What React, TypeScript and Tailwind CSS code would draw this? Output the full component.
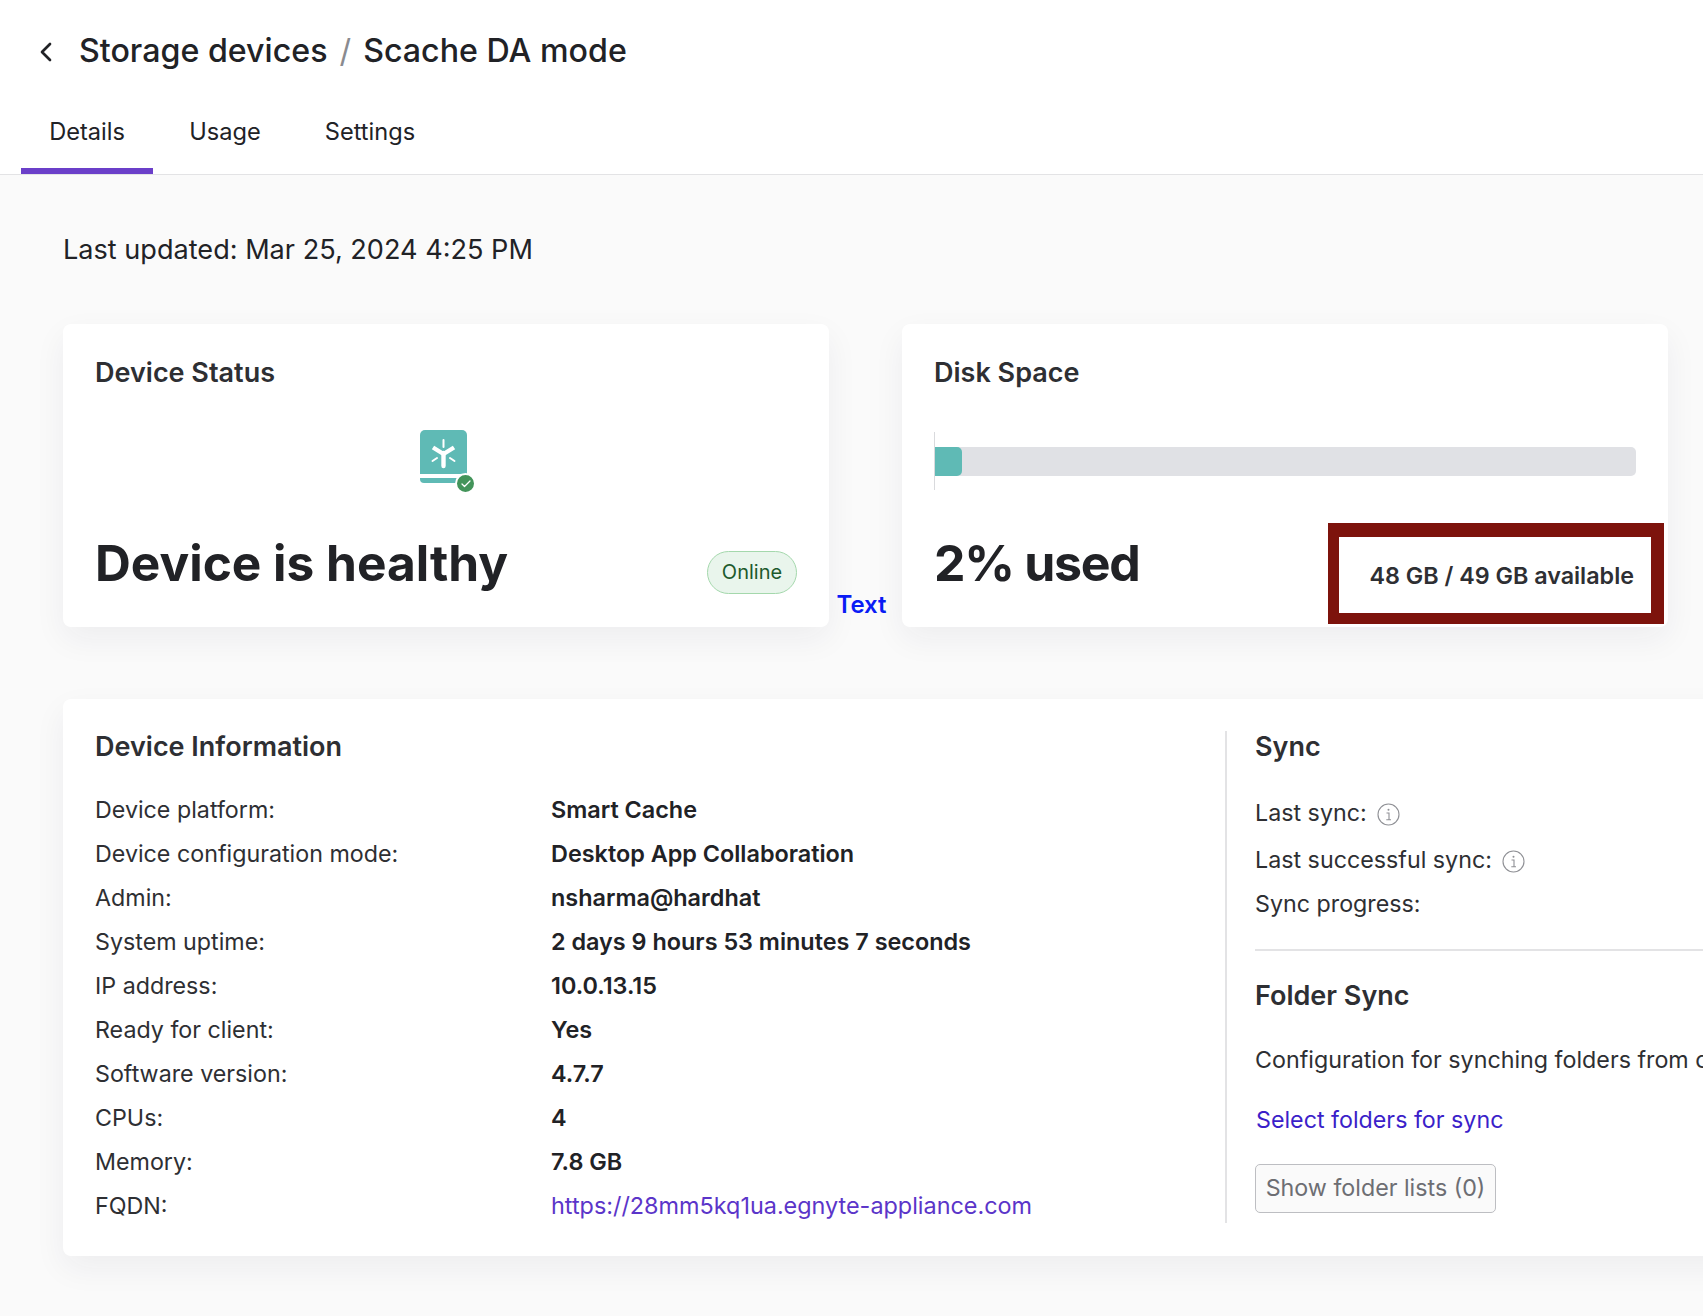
import { ChevronLeft, Check } from "lucide-react";

const deviceInfo = [
  { label: "Device platform:", value: "Smart Cache" },
  { label: "Device configuration mode:", value: "Desktop App Collaboration" },
  { label: "Admin:", value: "nsharma@hardhat" },
  { label: "System uptime:", value: "2 days 9 hours 53 minutes 7 seconds" },
  { label: "IP address:", value: "10.0.13.15" },
  { label: "Ready for client:", value: "Yes" },
  { label: "Software version:", value: "4.7.7" },
  { label: "CPUs:", value: "4" },
  { label: "Memory:", value: "7.8 GB" },
];

function DeviceIcon() {
  return (
    <div className="relative h-[54px] w-[47px]">
      <svg width="47" height="54" viewBox="0 0 47 54" className="block">
        <path d="M5 0H42a5 5 0 0 1 5 5V44H0V5a5 5 0 0 1 5-5Z" fill="#5fbab5" />
        <path d="M0 48H42V53H4a4 4 0 0 1-4-4Z" fill="#5fbab5" />
        <g stroke="#fff" fill="none">
          <path d="M23.5 10V17" strokeWidth="2" strokeLinecap="round" />
          <path d="M23.5 23V36" strokeWidth="4.4" strokeLinecap="round" />
          <path d="M23.5 24L13 17.5M23.5 24L34 17.5" strokeWidth="4.4" />
          <path d="M12.5 31L17 28M34.5 31L30 28" strokeWidth="2" strokeLinecap="round" />
        </g>
      </svg>
      <div className="absolute left-[35px] top-[43px] flex h-[21px] w-[21px] items-center justify-center rounded-full border-2 border-white bg-[#43945a]">
        <Check className="h-[12px] w-[12px] text-white" strokeWidth={2.5} />
      </div>
    </div>
  );
}

function InfoIcon() {
  return (
    <svg width="23" height="23" viewBox="0 0 23 23" fill="none" className="mt-[2px]">
      <circle cx="11.5" cy="11.5" r="10.5" stroke="#8f9095" strokeWidth="1.1" />
      <circle cx="11.5" cy="6.8" r="1" fill="#8f9095" />
      <path d="M9.5 10H12V16.5M9.3 16.8H14" stroke="#8f9095" strokeWidth="1.1" />
    </svg>
  );
}

export default function App() {
  return (
    <div className="h-[1316px] w-[1703px] overflow-hidden bg-[#fafafa] font-['Inter',sans-serif] text-[#212226]">
      <div className="h-[175px] border-b border-[#e3e3e5] bg-white">
        <div className="flex h-[100px] items-center pl-[30px] pt-[3px]">
          <ChevronLeft className="h-[32px] w-[32px] text-[#212226]" strokeWidth={2} />
          <h1 className="ml-[17px] text-[32.2px] font-medium leading-none">
            Storage devices
            <span className="mx-[12px] font-normal text-[#8a8b90]">/</span>
            Scache DA mode
          </h1>
        </div>
        <div className="flex h-[74px] pl-[21px] text-[23.6px] leading-none">
          <div className="flex w-[132px] items-center justify-center border-b-[6px] border-[#6b3fc9] pb-[4px]">
            Details
          </div>
          <div className="flex w-[144px] items-center justify-center pb-[10px]">Usage</div>
          <div className="flex w-[146px] items-center justify-center pb-[10px]">Settings</div>
        </div>
      </div>

      <div className="pl-[63px]">
        <p className="mt-[59px] text-[27.1px] leading-[32px]">Last updated: Mar 25, 2024 4:25 PM</p>

        <div className="mt-[58px] flex">
          <div className="h-[303px] w-[766px] rounded-lg bg-white px-[32px] shadow-[0_12px_32px_rgba(30,40,60,0.06)]">
            <h2 className="pt-[33px] text-[27px] font-semibold leading-[32px] text-[#2e2f33]">Device Status</h2>
            <div className="mt-[41px] flex justify-center pr-[5px]">
              <DeviceIcon />
            </div>
            <div className="mt-[48px] flex items-center justify-between">
              <span className="text-[49.6px] font-bold leading-[62px]">Device is healthy</span>
              <span className="mt-[18px] flex h-[43px] w-[90px] items-center justify-center rounded-full border border-[#a4d8ac] bg-[#e9f5ec] text-[20px] text-[#1d5a2c]">
                Online
              </span>
            </div>
          </div>

          <div className="flex h-[303px] w-[73px] items-end justify-center pb-[7px] pr-[8px]">
            <span className="text-[24px] font-semibold leading-[30px] text-[#0a1cf5]">Text</span>
          </div>

          <div className="relative h-[303px] w-[766px] rounded-lg bg-white px-[32px] shadow-[0_12px_32px_rgba(30,40,60,0.06)]">
            <h2 className="pt-[33px] text-[27px] font-semibold leading-[32px] text-[#2e2f33]">Disk Space</h2>
            <div className="relative mt-[58px] h-[29px] rounded-[5px] bg-[#e0e1e5]">
              <div className="h-full w-[28px] rounded-r-[5px] bg-[#5fbab5]" />
              <div className="absolute left-0 top-[-15px] h-[58px] w-px bg-[#d9dadd]" />
            </div>
            <div className="mt-[56px] text-[50px] font-bold leading-[62px] tracking-[-1.3px]">2% used</div>
            <div className="absolute bottom-[3px] right-[4px] flex h-[101px] w-[336px] items-center justify-end border-b-[11px] border-l-[11px] border-r-[13px] border-t-[14px] border-[#7d130c] bg-white pr-[17px] pt-[2px] text-[23.3px] font-semibold text-[#2e2f33]">
              48 GB / 49 GB available
            </div>
          </div>
        </div>

        <div className="mt-[72px] flex h-[557px] w-[1700px] rounded-lg bg-white py-[32px] shadow-[0_12px_32px_rgba(30,40,60,0.06)]">
          <div className="w-[1162px] shrink-0 px-[32px]">
            <h2 className="text-[27px] font-semibold leading-[32px] text-[#2e2f33]">Device Information</h2>
            <div className="mt-[25px]">
              {deviceInfo.map((row) => (
                <div key={row.label} className="flex h-[44px] items-center text-[23.4px]">
                  <span className="w-[456px] text-[23.25px] text-[#2e2f33]">{row.label}</span>
                  <span className="font-semibold">{row.value}</span>
                </div>
              ))}
              <div className="flex h-[44px] items-center text-[23.4px]">
                <span className="w-[456px] text-[23.25px] text-[#2e2f33]">FQDN:</span>
                <span className="text-[#5b35c9]">https://28mm5kq1ua.egnyte-appliance.com</span>
              </div>
            </div>
          </div>

          <div className="h-[492px] flex-1 border-l-2 border-[#e3e3e5] pl-[28px]">
            <h2 className="text-[27px] font-semibold leading-[32px] text-[#2e2f33]">Sync</h2>
            <div className="mt-[28px] flex h-[44px] items-center gap-[10px] text-[23.25px] text-[#2e2f33]">
              Last sync:
              <InfoIcon />
            </div>
            <div className="mt-[3px] flex h-[44px] items-center gap-[10px] text-[23.25px] text-[#2e2f33]">
              Last successful sync:
              <InfoIcon />
            </div>
            <div className="flex h-[44px] items-center text-[23.25px] text-[#2e2f33]">Sync progress:</div>
            <hr className="mt-[23px] border-t-2 border-[#e3e3e5]" />
            <h2 className="mt-[28px] text-[27px] font-semibold leading-[34px] text-[#2e2f33]">Folder Sync</h2>
            <p className="mt-[31px] whitespace-nowrap text-[23.25px] leading-[32px] text-[#2e2f33]">
              Configuration for synching folders from cloud
            </p>
            <a className="ml-px mt-[28px] block text-[23.25px] leading-[32px] text-[#3b1fc9]">Select folders for sync</a>
            <button className="mt-[28px] h-[49px] w-[241px] rounded-[5px] border border-[#bdbec2] bg-[#fafafa] text-[23.25px] text-[#6d6e73]">
              Show folder lists (0)
            </button>
          </div>
        </div>
      </div>
    </div>
  );
}
